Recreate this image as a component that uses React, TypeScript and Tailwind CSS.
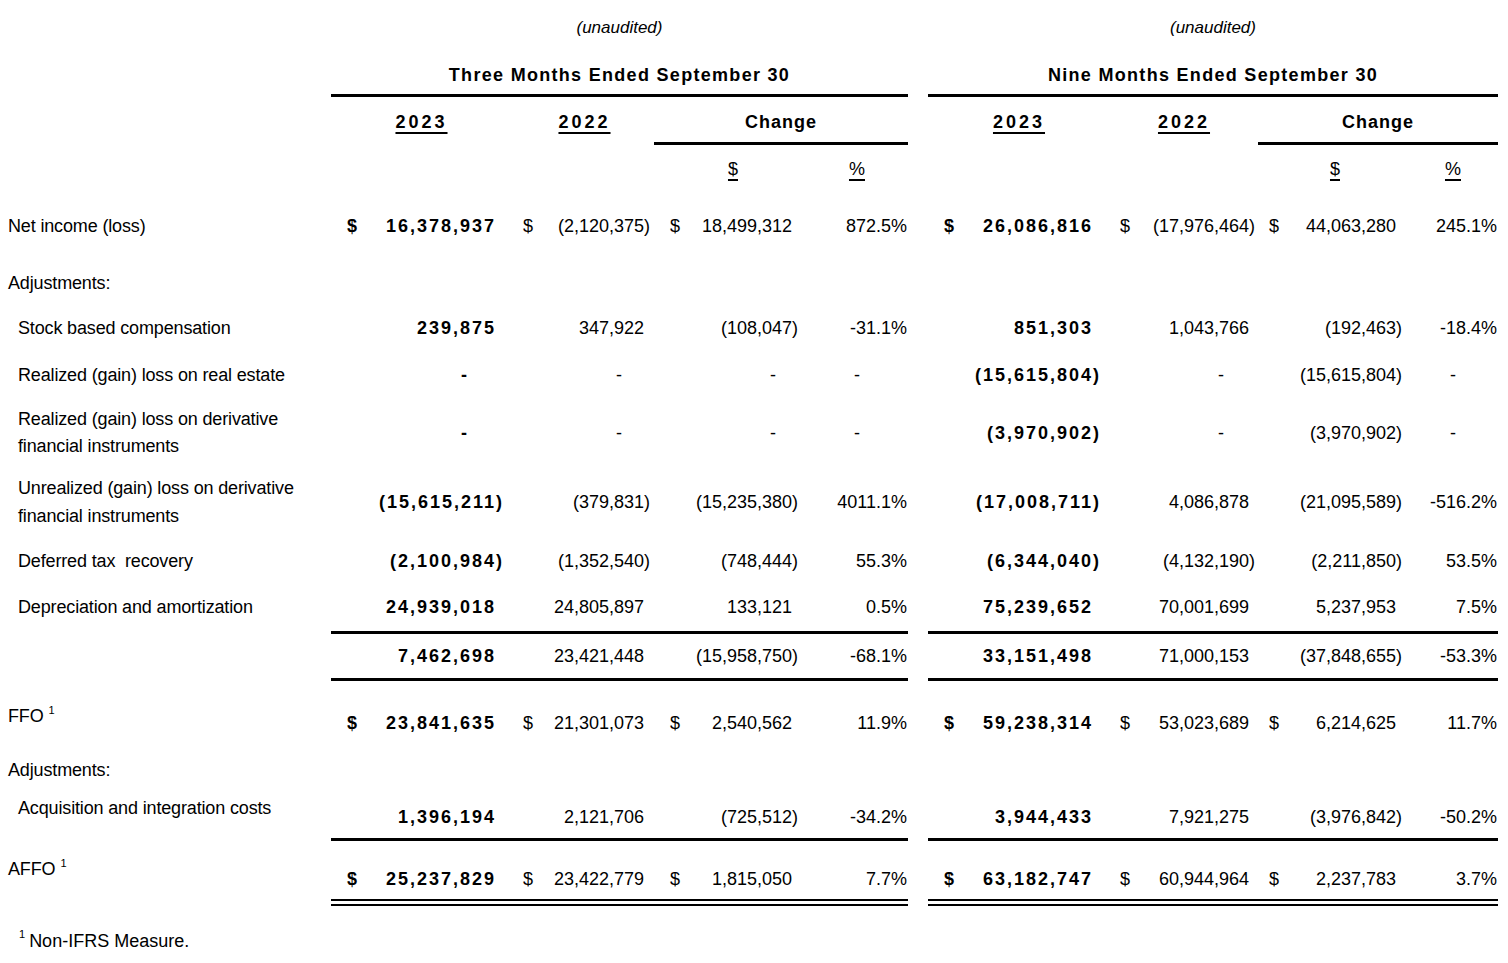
import React from 'react';

type Col = { w: string; dl: string; pr: string; dash: string; hp: string };

const T: Col[] = [
  { w: 'w-[171px]', dl: 'pl-[16px]', pr: 'pr-0', dash: 'pr-[33px]', hp: 'pl-[10px]' },
  { w: 'w-[152px]', dl: 'pl-[21px]', pr: 'pr-[4px]', dash: 'pr-[32px]', hp: 'pl-[13px]' },
  { w: 'w-[146px]', dl: 'pl-[16px]', pr: 'pr-[2px]', dash: 'pr-[24px]', hp: 'pl-[12px]' },
  { w: 'w-[108px]', dl: '', pr: 'pr-[1px]', dash: 'pr-[48px]', hp: 'pl-[6px]' },
];
const N: Col[] = [
  { w: 'w-[171px]', dl: 'pl-[16px]', pr: 'pr-0', dash: 'pr-[33px]', hp: 'pl-[11px]' },
  { w: 'w-[159px]', dl: 'pl-[21px]', pr: 'pr-[3px]', dash: 'pr-[34px]', hp: 'pl-[11px]' },
  { w: 'w-[146px]', dl: 'pl-[11px]', pr: 'pr-[2px]', dash: 'pr-[24px]', hp: 'pl-[8px]' },
  { w: 'w-[94px]', dl: '', pr: 'pr-[1px]', dash: 'pr-[42px]', hp: 'pl-[4px]' },
];

type Border = 'none' | 'single' | 'double';

type RowDef = {
  label: React.ReactNode;
  indent?: boolean;
  h: string;
  border?: Border;
  ny?: string;
  ly?: string;
  dollar?: boolean;
  three: string[];
  nine: string[];
};

function Cell({ col, v, bold, dollar, pct, ny }: { col: Col; v: string; bold: boolean; dollar: boolean; pct: boolean; ny: string }) {
  const base = `${col.w} flex items-center ${ny} ${bold ? 'font-bold tracking-[2px]' : ''}`;
  if (v === '') return <div className={col.w} />;
  if (v === '-') return <div className={`${base} justify-end ${col.dash}`}>-</div>;
  if (pct) return <div className={`${base} justify-end ${col.pr}`}>{v}</div>;
  const paren = v.startsWith('(');
  return (
    <div className={`${base} justify-between ${col.dl} ${col.pr}`}>
      <span className={dollar ? '' : 'invisible'}>$</span>
      <span className={bold ? '-mr-[2px] whitespace-nowrap' : 'whitespace-nowrap'}>
        {v}
        {!paren && <span className="invisible">)</span>}
      </span>
    </div>
  );
}

function Block({ cols, vals, dollar, border, ny }: { cols: Col[]; vals: string[]; dollar: boolean; border: Border; ny: string }) {
  const b =
    border === 'single'
      ? 'border-b-[3px] border-black'
      : border === 'double'
      ? 'border-b-[7px] border-double border-black'
      : '';
  return (
    <div className={`flex ${b}`}>
      {vals.map((v, i) => (
        <Cell key={i} col={cols[i]} v={v} bold={i === 0} dollar={dollar && i < 3} pct={i === 3} ny={ny} />
      ))}
    </div>
  );
}

function Sup({ children }: { children: React.ReactNode }) {
  return <span className="relative -top-[8px] text-[11px] ml-[5px]">{children}</span>;
}

const rows: RowDef[] = [
  {
    label: 'Net income (loss)',
    h: 'h-[66px]',
    dollar: true,
    three: ['16,378,937', '(2,120,375)', '18,499,312', '872.5%'],
    nine: ['26,086,816', '(17,976,464)', '44,063,280', '245.1%'],
  },
  { label: 'Adjustments:', h: 'h-[48px]', three: ['', '', '', ''], nine: ['', '', '', ''] },
  {
    label: 'Stock based compensation',
    indent: true,
    h: 'h-[42px]',
    three: ['239,875', '347,922', '(108,047)', '-31.1%'],
    nine: ['851,303', '1,043,766', '(192,463)', '-18.4%'],
  },
  {
    label: 'Realized (gain) loss on real estate',
    indent: true,
    h: 'h-[52px]',
    three: ['-', '-', '-', '-'],
    nine: ['(15,615,804)', '-', '(15,615,804)', '-'],
  },
  {
    label: (
      <span className="leading-[27px]">
        Realized (gain) loss on derivative
        <br />
        financial instruments
      </span>
    ),
    indent: true,
    h: 'h-[64px]',
    three: ['-', '-', '-', '-'],
    nine: ['(3,970,902)', '-', '(3,970,902)', '-'],
  },
  {
    label: (
      <span className="leading-[28px]">
        Unrealized (gain) loss on derivative
        <br />
        financial instruments
      </span>
    ),
    indent: true,
    h: 'h-[74px]',
    three: ['(15,615,211)', '(379,831)', '(15,235,380)', '4011.1%'],
    nine: ['(17,008,711)', '4,086,878', '(21,095,589)', '-516.2%'],
  },
  {
    label: <span className="whitespace-pre">Deferred tax  recovery</span>,
    indent: true,
    h: 'h-[44px]',
    three: ['(2,100,984)', '(1,352,540)', '(748,444)', '55.3%'],
    nine: ['(6,344,040)', '(4,132,190)', '(2,211,850)', '53.5%'],
  },
  {
    label: 'Depreciation and amortization',
    indent: true,
    h: 'h-[51px]',
    border: 'single',
    three: ['24,939,018', '24,805,897', '133,121', '0.5%'],
    nine: ['75,239,652', '70,001,699', '5,237,953', '7.5%'],
  },
  {
    label: '',
    h: 'h-[47px]',
    border: 'single',
    three: ['7,462,698', '23,421,448', '(15,958,750)', '-68.1%'],
    nine: ['33,151,498', '71,000,153', '(37,848,655)', '-53.3%'],
  },
  {
    label: (
      <span>
        FFO<Sup>1</Sup>
      </span>
    ),
    h: 'h-[66px]',
    ny: 'translate-y-[9px]',
    ly: 'translate-y-[2px]',
    dollar: true,
    three: ['23,841,635', '21,301,073', '2,540,562', '11.9%'],
    nine: ['59,238,314', '53,023,689', '6,214,625', '11.7%'],
  },
  { label: 'Adjustments:', h: 'h-[46px]', three: ['', '', '', ''], nine: ['', '', '', ''] },
  {
    label: 'Acquisition and integration costs',
    indent: true,
    h: 'h-[48px]',
    border: 'single',
    ny: 'translate-y-[2px]',
    ly: '-translate-y-[7px]',
    three: ['1,396,194', '2,121,706', '(725,512)', '-34.2%'],
    nine: ['3,944,433', '7,921,275', '(3,976,842)', '-50.2%'],
  },
  {
    label: (
      <span>
        AFFO<Sup>1</Sup>
      </span>
    ),
    h: 'h-[65px]',
    border: 'double',
    ny: 'translate-y-[9px]',
    ly: '-translate-y-[1px]',
    dollar: true,
    three: ['25,237,829', '23,422,779', '1,815,050', '7.7%'],
    nine: ['63,182,747', '60,944,964', '2,237,783', '3.7%'],
  },
];

function DataRow({ r }: { r: RowDef }) {
  const border = r.border ?? 'none';
  const lb =
    border === 'single'
      ? 'border-b-[3px] border-transparent'
      : border === 'double'
      ? 'border-b-[7px] border-transparent'
      : '';
  return (
    <div className={`flex ${r.h}`}>
      <div className={`w-[331px] flex items-center tracking-[-0.15px] ${r.indent ? 'pl-[18px]' : 'pl-[8px]'} ${lb}`}>
        <div className={r.ly ?? ''}>{r.label}</div>
      </div>
      <Block cols={T} vals={r.three} dollar={!!r.dollar} border={border} ny={r.ny ?? ''} />
      <div className="w-[20px]" />
      <Block cols={N} vals={r.nine} dollar={!!r.dollar} border={border} ny={r.ny ?? ''} />
    </div>
  );
}

function YearHeader({ cols, changeW }: { cols: Col[]; changeW: string }) {
  return (
    <div className="flex">
      <div className={`${cols[0].w} ${cols[0].hp} pt-[5px] border-b-[3px] border-transparent flex items-center justify-center`}>
        <span className="font-bold tracking-[3px] underline decoration-2 underline-offset-[4px]">2023</span>
      </div>
      <div className={`${cols[1].w} ${cols[1].hp} pt-[5px] border-b-[3px] border-transparent flex items-center justify-center`}>
        <span className="font-bold tracking-[3px] underline decoration-2 underline-offset-[4px]">2022</span>
      </div>
      <div className={`${changeW} pt-[5px] border-b-[3px] border-black flex items-center justify-center`}>
        <span className="font-bold tracking-[1px]">Change</span>
      </div>
    </div>
  );
}

function SymHeader({ cols }: { cols: Col[] }) {
  return (
    <div className="flex">
      <div className={cols[0].w} />
      <div className={cols[1].w} />
      <div className={`${cols[2].w} ${cols[2].hp} flex items-center justify-center`}>
        <span className="underline decoration-2 underline-offset-[4px]">$</span>
      </div>
      <div className={`${cols[3].w} ${cols[3].hp} flex items-center justify-center`}>
        <span className="underline decoration-2 underline-offset-[4px]">%</span>
      </div>
    </div>
  );
}

export default function App() {
  return (
    <div className="w-[1508px] h-[963px] overflow-hidden bg-white text-black font-['Liberation_Sans',Arial,sans-serif] text-[18px] leading-normal">
      {/* (unaudited) */}
      <div className="flex h-[56px]">
        <div className="w-[331px]" />
        <div className="w-[577px] flex items-center justify-center italic text-[17px]">(unaudited)</div>
        <div className="w-[20px]" />
        <div className="w-[570px] flex items-center justify-center italic text-[17px]">(unaudited)</div>
      </div>
      {/* Period titles */}
      <div className="flex h-[41px]">
        <div className="w-[331px]" />
        <div className="w-[577px] flex items-center justify-center font-bold tracking-[1.3px] border-b-[3px] border-black">
          Three Months Ended September 30
        </div>
        <div className="w-[20px]" />
        <div className="w-[570px] flex items-center justify-center font-bold tracking-[1.3px] border-b-[3px] border-black">
          Nine Months Ended September 30
        </div>
      </div>
      {/* Years */}
      <div className="flex h-[48px]">
        <div className="w-[331px]" />
        <YearHeader cols={T} changeW="w-[254px]" />
        <div className="w-[20px]" />
        <YearHeader cols={N} changeW="w-[240px]" />
      </div>
      {/* $ % */}
      <div className="flex h-[48px]">
        <div className="w-[331px]" />
        <SymHeader cols={T} />
        <div className="w-[20px]" />
        <SymHeader cols={N} />
      </div>
      {rows.map((r, i) => (
        <DataRow key={i} r={r} />
      ))}
      <div className="h-[57px] pt-[14px] pl-[19px] flex items-center">
        <span className="relative -top-[7px] text-[11px] mr-[4px]">1</span>
        <span>Non-IFRS Measure.</span>
      </div>
    </div>
  );
}
